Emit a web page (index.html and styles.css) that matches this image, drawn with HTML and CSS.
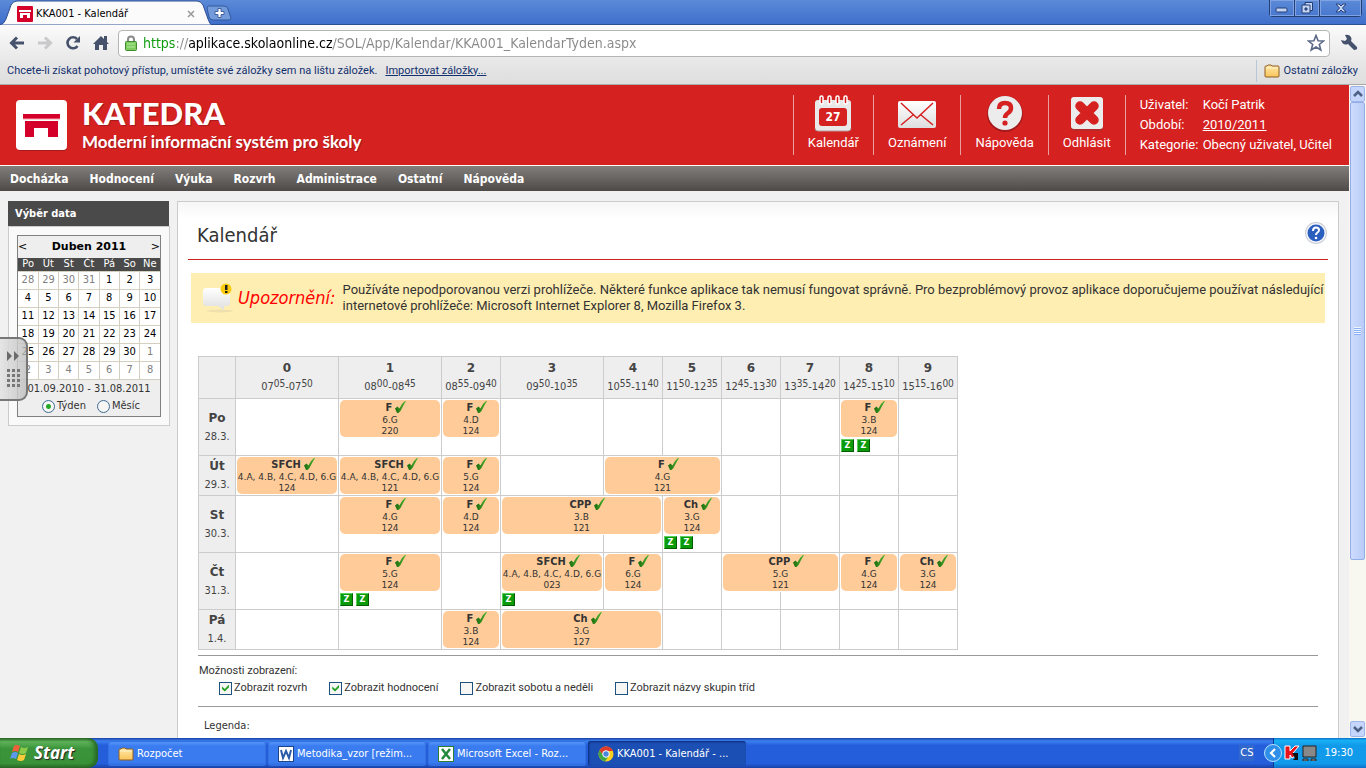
FILE: index.html
```html
<!DOCTYPE html>
<html lang="cs">
<head>
<meta charset="utf-8">
<title>KKA001 - Kalendář</title>
<link rel="stylesheet" href="styles.css">
</head>
<body>
<svg class="defs" aria-hidden="true">
  <defs>
    <linearGradient id="leaf" x1="0" x2="1"><stop offset="0" stop-color="#1c6a10"/><stop offset="1" stop-color="#4cb82c"/></linearGradient>
    <linearGradient id="silver" x1="0" y1="0" x2="0" y2="1"><stop offset="0" stop-color="#fff"/><stop offset="1" stop-color="#dedede"/></linearGradient>
    <linearGradient id="gold" x1="0" y1="0" x2="0" y2="1"><stop offset="0" stop-color="#ffe9a8"/><stop offset="1" stop-color="#fac45c"/></linearGradient>
    <symbol id="tick" viewBox="0 0 11 12"><path d="M0 7.500L2.500 5.500L4.500 7.500Q6.500 2.500 10 0H11Q8 5 5.500 10L3.500 12H2Z" fill="url(#leaf)"/></symbol>
    <symbol id="desk" viewBox="0 0 16 16"><rect width="16" height="16" rx="1" fill="#d4002a"/><path d="M2 4h12v2H2zM3 7h10v5h-3V9H6v3H3z" fill="#fff"/></symbol>
    <symbol id="folder" viewBox="0 0 16 14"><path d="M1 12V3q0-1 1-1h1l1-1h3l1 1h6q1 0 1 1v9q0 1-1 1H2q-1 0-1-1z" fill="url(#gold)" stroke="#8f5f20"/><path d="M2 4h12" stroke="#fff3c8"/></symbol>
  </defs>
</svg>

<header class="chrome">
  <div class="tabstrip">
    <div class="tab">
      <svg class="tab-shape" viewBox="0 0 212 25" preserveAspectRatio="none"><path d="M0 25Q4 24 6 19L11 5Q13 1 17 1H197Q201 1 203 5L208 19Q210 25 212 25Z" fill="#fbfbfb" stroke="#2c4f92"/></svg>
      <svg class="tab-icon"><use href="#desk"/></svg>
      <span class="tab-title">KKA001 - Kalendář</span>
      <button class="tab-close" aria-label="Zavřít kartu"><svg viewBox="0 0 8 8"><path d="M1 1l6 6M7 1L1 7" stroke="#999" stroke-width="1.500"/></svg></button>
    </div>
    <button class="new-tab" aria-label="Nová karta"><svg viewBox="0 0 26 16"><path d="M3 1H18Q21 1 22 4L25 13Q25 15 23 15H7Q4 15 3 12L1 3Q1 1 3 1Z" fill="#739ada" stroke="#33599e"/><path d="M9 6.500h3v-3h3v3h3v3h-3v3h-3v-3H9z" fill="#fff" stroke="#44639d"/></svg></button>
    <div class="window-buttons">
      <button aria-label="Minimalizovat"><svg viewBox="0 0 16 14"><rect x="2" y="7" width="11" height="4" rx="1" fill="#c3d4f3" stroke="#253f75"/></svg></button>
      <button aria-label="Obnovit"><svg viewBox="0 0 16 14"><path d="M6 1.500h7.500v8H11M6 1.500V4" fill="#c3d4f3" stroke="#253f75"/><path d="M3 4h8v8H3z" fill="#c3d4f3" stroke="#253f75"/><path d="M6 7h2v2H6z" fill="#4a72be" stroke="#253f75"/></svg></button>
      <button class="wide" aria-label="Zavřít"><svg viewBox="0 0 16 14"><path d="M3 3h3l2 2 2-2h3L9.500 7 13 11h-3L8 9l-2 2H3L6.500 7z" fill="#c3d4f3" stroke="#253f75"/></svg></button>
    </div>
  </div>
  <div class="toolbar">
    <button class="tool" aria-label="Zpět"><svg viewBox="0 0 18 18"><path d="M16 9H4M9 3.500L3.500 9L9 14.500" stroke="#46526b" stroke-width="3"/></svg></button>
    <button class="tool" aria-label="Vpřed"><svg viewBox="0 0 18 18"><path d="M2 9h12M9 3.500L14.500 9L9 14.500" stroke="#c9c9cc" stroke-width="3"/></svg></button>
    <button class="tool" aria-label="Obnovit stránku"><svg viewBox="0 0 18 18"><path d="M13.500 12A5.500 5.500 0 1 1 13 5" stroke="#46526b" stroke-width="2.600"/><path d="M16 2v6.500H9.500z" fill="#46526b"/></svg></button>
    <button class="tool" aria-label="Domů"><svg viewBox="0 0 18 18"><path d="M1 10L9 2l3 3V2h3v6l2 2h-2v6h-4v-5H7v5H3v-6z" fill="#46526b"/></svg></button>
    <div class="omnibox">
      <svg class="lock" viewBox="0 0 12 16"><path d="M3 7V4.500a3 3 0 0 1 6 0V7" stroke="#8a8a8a" stroke-width="2" fill="none"/><rect x=".5" y="6.500" width="11" height="9" rx="1" fill="#7ccb5c" stroke="#3f8c2c"/><path d="M2 9h8M2 12h8" stroke="#b5eaa0"/></svg>
      <input class="url" type="text" aria-label="Adresa" value="https://aplikace.skolaonline.cz/SOL/App/Kalendar/KKA001_KalendarTyden.aspx">
      <button class="star" aria-label="Přidat záložku"><svg viewBox="0 0 18 18"><path d="M9 1.500l2.100 5.200 5.400.3-4.200 3.500 1.500 5.500L9 13l-4.800 3 1.500-5.500L1.500 7l5.400-.3z" fill="#fff" stroke="#5a6984" stroke-width="1.600"/></svg></button>
    </div>
    <button class="tool wrench" aria-label="Nastavení"><svg viewBox="0 0 18 18"><path d="M1 6l4 1 2-2-2-4q4-1 6 2 1 2 0 4l6 6q1 3-3 3L8 10Q3 12 1 6z" fill="#46526b"/></svg></button>
  </div>
  <div class="bookmarks">
    <span>Chcete-li získat pohotový přístup, umístěte své záložky sem na lištu záložek.</span>
    <a href="#">Importovat záložky...</a>
    <button class="other"><svg><use href="#folder"/></svg>Ostatní záložky</button>
  </div>
</header>

<div class="viewport">
  <div class="page">
    <div class="banner">
      <svg class="logo" viewBox="0 0 52 52"><rect x="1" y="2" width="50" height="50" rx="4" fill="#a51a1c"/><rect x="0" y="1" width="51" height="50" rx="4" fill="#fff"/><path d="M7 15h37v5H7zM9 22h33v16H32V29H18v9H9z" fill="#d4002a"/><path d="M7 20h37" stroke="#f4a0a8"/></svg>
      <div class="brand"><div class="brand-name">KATEDRA</div><div class="brand-sub">Moderní informační systém pro školy</div></div>
      <nav class="actions">
        <a href="#"><svg viewBox="0 0 38 38"><rect x="1" y="5" width="36" height="31" rx="3" fill="#e9e9e9"/><path d="M1 33q0 3 3 3h30q3 0 3-3" stroke="#b59a9a" fill="none"/><rect x="5" y="13" width="28" height="18" rx="3" fill="#d52120"/><g fill="#d52120" stroke="#fff" stroke-width="1.500"><rect x="6" y="1" width="3" height="8" rx="1.500"/><rect x="14" y="1" width="3" height="8" rx="1.500"/><rect x="22" y="1" width="3" height="8" rx="1.500"/><rect x="30" y="1" width="3" height="8" rx="1.500"/></g><text x="19" y="26" text-anchor="middle" class="cal-num">27</text></svg>Kalendář</a>
        <a href="#"><svg viewBox="0 0 38 38"><rect x="0" y="6" width="38" height="27" rx="2" fill="url(#silver)"/><path d="M3 8l16 15L35 8M3 30l12-10M35 30L23 20" stroke="#d52120" fill="none" stroke-width="1.500"/></svg>Oznámení</a>
        <a href="#"><svg viewBox="0 0 38 38"><circle cx="19" cy="19" r="18" fill="#a51a1c"/><circle cx="19" cy="18" r="17" fill="#ececec"/><path d="M13 14q0-6 6-6t6 5q0 3-3 5-3 2-3 5" stroke="#d52120" stroke-width="4.500" fill="none"/><circle cx="19" cy="28" r="2.600" fill="#d52120"/></svg>Nápověda</a>
        <a href="#"><svg viewBox="0 0 38 38"><rect x="3" y="3" width="32" height="33" rx="3" fill="#b52a2a"/><rect x="3" y="2" width="32" height="32" rx="3" fill="#ececec"/><path d="M12 11l14 14M26 11L12 25" stroke="#d52120" stroke-width="9.500" stroke-linecap="round"/></svg>Odhlásit</a>
        <dl class="user">
          <dt>Uživatel:</dt><dd>Kočí Patrik</dd>
          <dt>Období:</dt><dd><a href="#">2010/2011</a></dd>
          <dt>Kategorie:</dt><dd>Obecný uživatel, Učitel</dd>
        </dl>
      </nav>
    </div>
    <nav class="menu">
      <a href="#">Docházka</a><a href="#">Hodnocení</a><a href="#">Výuka</a><a href="#">Rozvrh</a><a href="#">Administrace</a><a href="#">Ostatní</a><a href="#">Nápověda</a>
    </nav>
    <div class="columns">
      <aside class="side">
        <h2>Výběr data</h2>
        <div class="side-body">
          <div class="picker">
            <div class="month"><button aria-label="Předchozí měsíc">&lt;</button><b>Duben 2011</b><button aria-label="Další měsíc">&gt;</button></div>
            <table class="days">
              <thead><tr><th>Po</th><th>Út</th><th>St</th><th>Čt</th><th>Pá</th><th>So</th><th>Ne</th></tr></thead>
              <tbody>
                <tr><td class="off">28</td><td class="off">29</td><td class="off">30</td><td class="off">31</td><td>1</td><td>2</td><td>3</td></tr>
                <tr><td>4</td><td>5</td><td>6</td><td>7</td><td>8</td><td>9</td><td>10</td></tr>
                <tr><td>11</td><td>12</td><td>13</td><td>14</td><td>15</td><td>16</td><td>17</td></tr>
                <tr><td>18</td><td>19</td><td>20</td><td>21</td><td>22</td><td>23</td><td>24</td></tr>
                <tr><td>25</td><td>26</td><td>27</td><td>28</td><td>29</td><td>30</td><td class="off">1</td></tr>
                <tr><td class="off">2</td><td class="off">3</td><td class="off">4</td><td class="off">5</td><td class="off">6</td><td class="off">7</td><td class="off">8</td></tr>
              </tbody>
            </table>
            <div class="range">01.09.2010 - 31.08.2011</div>
            <div class="mode"><label><input type="radio" name="mode" checked>Týden</label><label><input type="radio" name="mode">Měsíc</label></div>
          </div>
        </div>
      </aside>
      <main class="panel">
        <div class="title"><h1>Kalendář</h1><button class="help" aria-label="Nápověda"><svg viewBox="0 0 24 24"><circle cx="12" cy="12" r="11" fill="#c9cdd6"/><circle cx="12" cy="12" r="10" fill="#f4f6fa"/><circle cx="12" cy="12" r="8.500" fill="#2a5fc0"/><path d="M9 10q0-3.500 3-3.500t3 2.500q0 1.500-1.500 2.500T12 14" stroke="#fff" stroke-width="2" fill="none"/><circle cx="12" cy="17" r="1.300" fill="#fff"/></svg></button></div>
        <div class="notice">
          <svg viewBox="0 0 30 30"><ellipse cx="17" cy="28" rx="13" ry="1.500" fill="#eee0ac"/><path d="M3 5h21q3 0 3 3v12q0 3-3 3h-3v4l-6-4H3q-3 0-3-3V8q0-3 3-3z" fill="url(#silver)"/><circle cx="23" cy="6" r="5.500" fill="#fdcb0e"/><path d="M22 2h2.500v5H22zM22 8h2.500v2H22z" fill="#222"/></svg>
          <em>Upozornění:</em>
          <p>Používáte nepodporovanou verzi prohlížeče. Některé funkce aplikace tak nemusí fungovat správně. Pro bezproblémový provoz aplikace doporučujeme používat následující internetové prohlížeče: Microsoft Internet Explorer 8, Mozilla Firefox 3.</p>
        </div>
        <table class="plan">
          <colgroup><col class="c-day"><col class="c-wide"><col class="c-wide"><col class="c-std"><col class="c-wide"><col class="c-std"><col class="c-std"><col class="c-std"><col class="c-std"><col class="c-std"><col class="c-std"></colgroup>
          <thead><tr><th></th>
            <th><b>0</b><span>07<sup>05</sup>-07<sup>50</sup></span></th>
            <th><b>1</b><span>08<sup>00</sup>-08<sup>45</sup></span></th>
            <th><b>2</b><span>08<sup>55</sup>-09<sup>40</sup></span></th>
            <th><b>3</b><span>09<sup>50</sup>-10<sup>35</sup></span></th>
            <th><b>4</b><span>10<sup>55</sup>-11<sup>40</sup></span></th>
            <th><b>5</b><span>11<sup>50</sup>-12<sup>35</sup></span></th>
            <th><b>6</b><span>12<sup>45</sup>-13<sup>30</sup></span></th>
            <th><b>7</b><span>13<sup>35</sup>-14<sup>20</sup></span></th>
            <th><b>8</b><span>14<sup>25</sup>-15<sup>10</sup></span></th>
            <th><b>9</b><span>15<sup>15</sup>-16<sup>00</sup></span></th>
          </tr></thead>
          <tbody>
            <tr class="tall"><th><b>Po</b><span>28.3.</span></th><td></td>
              <td><div class="lesson"><b>F <svg><use href="#tick"/></svg></b><span>6.G</span><span>220</span></div></td>
              <td><div class="lesson"><b>F <svg><use href="#tick"/></svg></b><span>4.D</span><span>124</span></div></td>
              <td></td><td></td><td></td><td></td><td></td>
              <td><div class="lesson"><b>F <svg><use href="#tick"/></svg></b><span>3.B</span><span>124</span></div><div class="marks"><i>Z</i><i>Z</i></div></td><td></td></tr>
            <tr><th><b>Út</b><span>29.3.</span></th>
              <td><div class="lesson"><b>SFCH <svg><use href="#tick"/></svg></b><span>4.A, 4.B, 4.C, 4.D, 6.G</span><span>124</span></div></td>
              <td><div class="lesson"><b>SFCH <svg><use href="#tick"/></svg></b><span>4.A, 4.B, 4.C, 4.D, 6.G</span><span>121</span></div></td>
              <td><div class="lesson"><b>F <svg><use href="#tick"/></svg></b><span>5.G</span><span>124</span></div></td>
              <td></td>
              <td><div class="lesson double"><b>F <svg><use href="#tick"/></svg></b><span>4.G</span><span>121</span></div></td>
              <td></td><td></td><td></td><td></td><td></td></tr>
            <tr class="tall"><th><b>St</b><span>30.3.</span></th><td></td>
              <td><div class="lesson"><b>F <svg><use href="#tick"/></svg></b><span>4.G</span><span>124</span></div></td>
              <td><div class="lesson"><b>F <svg><use href="#tick"/></svg></b><span>4.D</span><span>124</span></div></td>
              <td><div class="lesson double"><b>CPP <svg><use href="#tick"/></svg></b><span>3.B</span><span>121</span></div></td>
              <td></td>
              <td><div class="lesson"><b>Ch <svg><use href="#tick"/></svg></b><span>3.G</span><span>124</span></div><div class="marks"><i>Z</i><i>Z</i></div></td>
              <td></td><td></td><td></td><td></td></tr>
            <tr class="tall"><th><b>Čt</b><span>31.3.</span></th><td></td>
              <td><div class="lesson"><b>F <svg><use href="#tick"/></svg></b><span>5.G</span><span>124</span></div><div class="marks"><i>Z</i><i>Z</i></div></td>
              <td></td>
              <td><div class="lesson"><b>SFCH <svg><use href="#tick"/></svg></b><span>4.A, 4.B, 4.C, 4.D, 6.G</span><span>023</span></div><div class="marks"><i>Z</i></div></td>
              <td><div class="lesson"><b>F <svg><use href="#tick"/></svg></b><span>6.G</span><span>124</span></div></td>
              <td></td>
              <td><div class="lesson double"><b>CPP <svg><use href="#tick"/></svg></b><span>5.G</span><span>121</span></div></td>
              <td></td>
              <td><div class="lesson"><b>F <svg><use href="#tick"/></svg></b><span>4.G</span><span>124</span></div></td>
              <td><div class="lesson"><b>Ch <svg><use href="#tick"/></svg></b><span>3.G</span><span>124</span></div></td></tr>
            <tr><th><b>Pá</b><span>1.4.</span></th><td></td><td></td>
              <td><div class="lesson"><b>F <svg><use href="#tick"/></svg></b><span>3.B</span><span>124</span></div></td>
              <td><div class="lesson double"><b>Ch <svg><use href="#tick"/></svg></b><span>3.G</span><span>127</span></div></td>
              <td></td><td></td><td></td><td></td><td></td><td></td></tr>
          </tbody>
        </table>
        <fieldset class="options">
          <legend>Možnosti zobrazení:</legend>
          <div class="checks">
            <label><input type="checkbox" checked>Zobrazit rozvrh</label>
            <label><input type="checkbox" checked>Zobrazit hodnocení</label>
            <label><input type="checkbox">Zobrazit sobotu a neděli</label>
            <label><input type="checkbox">Zobrazit názvy skupin tříd</label>
          </div>
        </fieldset>
        <div class="legend">Legenda:</div>
      </main>
    </div>
  </div>
  <div class="scrollbar">
    <button aria-label="Nahoru"><svg viewBox="0 0 10 8"><path d="M1 6l4-4 4 4" stroke="#4d6185" stroke-width="2.500"/></svg></button>
    <div class="track"><div class="thumb"><span></span></div></div>
    <button aria-label="Dolů"><svg viewBox="0 0 10 8"><path d="M1 2l4 4 4-4" stroke="#4d6185" stroke-width="2.500"/></svg></button>
  </div>
  <button class="drawer" aria-label="Vysunout panel"><svg viewBox="0 0 28 64"><path d="M7 14l5 5-5 5zM14 14l5 5-5 5z" fill="#6a6a6a"/><g fill="#777"><path d="M7 32h3v3H7zM12 32h3v3h-3zM17 32h3v3h-3zM7 37h3v3H7zM12 37h3v3h-3zM17 37h3v3h-3zM7 42h3v3H7zM12 42h3v3h-3zM17 42h3v3h-3zM7 47h3v3H7zM12 47h3v3h-3zM17 47h3v3h-3z"/></g></svg></button>
</div>

<footer class="taskbar">
  <button class="start"><svg viewBox="0 0 20 20"><path d="M4 3q3-2 6 0L8 9Q5 7 2 9z" fill="#f0603a"/><path d="M11 4q3 2 7 0l-2 6q-3 2-7 0z" fill="#8ccc4a"/><path d="M2 10q3-2 6 0l-2 6q-3-2-6 0z" fill="#5c9af0"/><path d="M9 11q3 2 7 0l-2 6q-3 2-7 0z" fill="#fbcb3a"/></svg>Start</button>
  <div class="tasks">
    <button><svg><use href="#folder"/></svg><span>Rozpočet</span></button>
    <button><svg viewBox="0 0 16 16"><rect x=".5" y=".5" width="15" height="15" fill="#fff" stroke="#1d4488"/><path d="M3 4l2 8 3-7 3 7 2-8" stroke="#2a5ca8" stroke-width="2" fill="none"/></svg><span>Metodika_vzor [režim...</span></button>
    <button><svg viewBox="0 0 16 16"><rect x=".5" y=".5" width="15" height="15" fill="#fff" stroke="#2b7f36"/><path d="M4 3l8 10M12 3L4 13" stroke="#23893a" stroke-width="2.500"/></svg><span>Microsoft Excel - Roz...</span></button>
    <button class="active"><svg viewBox="0 0 16 16"><circle cx="8" cy="8" r="7.500" fill="#fbd01e"/><path d="M1.500 4.500A7.500 7.500 0 0 1 15 5H8L5 9z" fill="#e03a2c"/><path d="M1.500 4.500A7.500 7.500 0 0 0 7 15.400L10 11 5 9z" fill="#3fa648"/><circle cx="8" cy="8" r="3.300" fill="#4a86dc" stroke="#fff"/></svg><span>KKA001 - Kalendář - ...</span></button>
  </div>
  <span class="lang">CS</span>
  <div class="tray">
    <button class="expand" aria-label="Zobrazit skryté ikony"><svg viewBox="0 0 18 18"><circle cx="9" cy="9" r="8.500" fill="#2f8fe8" stroke="#b8e0ff"/><path d="M11 5L7 9l4 4" stroke="#fff" stroke-width="2.200" fill="none"/></svg></button>
    <svg class="tray-icon" viewBox="0 0 16 16"><path d="M1 1h5v5l5-5h4L9 8l2 3-3 2-2-3v4H1z" fill="#e8131b" stroke="#fff"/><path d="M8 8h6v7H9l2-2z" fill="#111"/></svg>
    <svg class="tray-icon" viewBox="0 0 16 16"><path d="M1 1h13v11H1z" fill="#888" stroke="#222"/><path d="M1 14h5v2H1zM9 14h5v2H9z" fill="#999" stroke="#222"/></svg>
    <time>19:30</time>
  </div>
</footer>
</body>
</html>
```

FILE: styles.css
```css
* { box-sizing: border-box; }
body {
  margin: 0; height: 100vh; display: flex; flex-direction: column; overflow: hidden;
  font: 11px/14px "DejaVu Sans Condensed", "DejaVu Sans", sans-serif; color: #333;
}
button { font: inherit; color: inherit; border: 0; background: none; padding: 0; margin: 0; }
svg { display: block; fill: none; flex: none; }
.defs { position: absolute; width: 0; height: 0; }

/* browser frame */
.tabstrip { height: 25px; display: flex; align-items: flex-end; background: linear-gradient(#5b8ad8, #3f6fcb); border-bottom: 1px solid #2c4f92; }
.tab { position: relative; width: 212px; height: 25px; margin-bottom: -1px; display: flex; align-items: center; padding: 2px 17px 0; color: #000; }
.tab-shape { position: absolute; left: 0; top: 0; width: 100%; height: 100%; }
.tab-icon { position: relative; width: 16px; height: 16px; }
.tab-title { position: relative; margin-left: 3px; flex: 1; white-space: nowrap; }
.tab-close { position: relative; }
.tab-close svg { width: 8px; height: 8px; }
.new-tab { align-self: center; margin-left: -6px; padding-top: 1px; }
.new-tab svg { width: 26px; height: 16px; }
.window-buttons { margin-left: auto; margin-right: 4px; align-self: flex-start; display: flex; border: 1px solid #253f75; border-top: 0; border-radius: 0 0 4px 4px; }
.window-buttons button { width: 25px; height: 16px; display: grid; place-items: center; border-right: 1px solid #253f75; box-shadow: inset 0 0 0 1px #7fa3e2; }
.window-buttons .wide { width: 41px; border-right: 0; }
.window-buttons svg { width: 16px; height: 14px; }
.toolbar { height: 34px; display: flex; align-items: center; gap: 10px; padding: 2px 8px 0; background: linear-gradient(#fbfbfb, #e9e9e9); }
.tool svg { width: 18px; height: 18px; }
.omnibox { flex: 1; height: 27px; display: flex; align-items: center; margin-left: -2px; padding: 0 4px 0 6px; background: #fff; border: 1px solid #b4b4b4; border-radius: 4px; }
.lock { width: 12px; height: 16px; }
.url {
  flex: 1; min-width: 0; border: 0; padding: 0 0 0 6px; font: 14px/20px "DejaVu Sans Condensed", sans-serif; color: transparent;
  background: linear-gradient(90deg, #0a9a0a 39px, #888 39px 51px, #000 51px 196px, #888 196px) text;
}
.star svg { width: 18px; height: 18px; }
.bookmarks { height: 26px; display: flex; align-items: center; gap: 8px; padding: 0 8px 2px 7px; background: linear-gradient(#e8e8e8, #dedede); border-bottom: 1px solid #aaa; color: #12306e; white-space: nowrap; font-family: Roboto, sans-serif; }
.bookmarks a { color: inherit; }
.other { margin-left: auto; display: flex; align-items: center; gap: 4px; border-left: 1px solid #b8c6d8; padding-left: 7px; height: 22px; }
.other svg { width: 16px; height: 14px; }

/* page */
.viewport { position: relative; flex: 1; min-height: 0; display: flex; }
.page { flex: 1; min-width: 0; display: flex; flex-direction: column; overflow: hidden; background: #f1f1f1; }
.banner { height: 80px; flex: none; display: flex; align-items: center; padding-left: 16px; background: #d52120; color: #fff; }
.logo { width: 52px; height: 52px; }
.brand { margin-left: 14px; font-family: Lato, sans-serif; font-weight: 700; text-shadow: 1px 1px 0 #a51a1c; white-space: nowrap; }
.brand-name { font-size: 31px; line-height: 34px; font-weight: 900; }
.brand-sub { font-size: 17px; line-height: 24px; }
.actions { margin-left: auto; display: flex; font: 13px/20px Roboto, sans-serif; }
.actions > a { display: flex; flex-direction: column; align-items: center; padding: 0 14px; height: 60px; border-left: 1px solid #e9a09f; color: #fff; text-decoration: none; }
.actions > a svg { width: 38px; height: 38px; }
.cal-num { font: 700 12px "DejaVu Sans Condensed", sans-serif; fill: #fff; }
.user { margin: 0; padding: 0 17px 0 14px; border-left: 1px solid #e9a09f; display: grid; grid-template-columns: 63px auto; line-height: 20px; white-space: nowrap; }
.user dd { margin: 0; }
.user a { color: #fff; }
.menu { height: 26px; flex: none; display: flex; align-items: center; gap: 21px; padding-left: 10px; border-top: 1px solid #fff; background: linear-gradient(#827e7c, #4d4a48); font-size: 12px; font-weight: 700; }
.menu a { color: #fff; text-decoration: none; }
.columns { flex: 1; display: flex; gap: 7px; padding: 10px 10px 0 8px; align-items: stretch; }
.side { width: 162px; flex: none; }
.side h2 { margin: 0 1px 0 0; height: 25px; padding-left: 7px; font-size: 11px; line-height: 25px; color: #fff; background: #4a4a4a; }
.side-body { padding: 8px; background: #f9f9f9; border: 1px solid #ccc; }
.picker { border: 1px solid #808080; background: #eee; color: #000; }
.month { height: 22px; display: flex; justify-content: space-between; align-items: center; font-family: "DejaVu Sans", sans-serif; }
.days { width: 100%; border-collapse: collapse; table-layout: fixed; text-align: center; background: #fff; }
.days th { height: 13px; line-height: 12px; padding: 0; background: #4a4a4a; color: #fff; font-weight: 400; }
.days td { height: 18px; padding: 0; border: 1px solid #d4d0c0; }
.days td:first-child { border-left: 0; }
.days td:last-child { border-right: 0; }
.days .off { color: #808080; }
.range { height: 17px; line-height: 17px; text-align: center; color: #333; white-space: nowrap; }
.mode { height: 19px; display: flex; justify-content: center; gap: 11px; padding-left: 4px; color: #333; }
.mode label { display: flex; align-items: center; gap: 2px; }
input[type=radio] { appearance: none; width: 13px; height: 13px; margin: 0; border: 1px solid #3c6a94; border-radius: 50%; background: #f6f6f4; }
input[type=radio]:checked { background: radial-gradient(circle, #28a828 2px, #f6f6f4 3px); }
.panel { flex: 1; min-width: 0; padding: 0 10px; border: 1px solid #ccc; background: linear-gradient(#f6f6f6, #fff 18px); }
.title { height: 58px; display: flex; align-items: center; justify-content: space-between; padding: 8px 0 0 9px; border-bottom: 1px solid #c22; }
.title h1 { margin: 0; font-size: 20px; line-height: 26px; font-weight: 400; }
.help { padding-bottom: 4px; }
.help svg { width: 24px; height: 24px; }
.notice { margin: 13px 3px 33px; min-height: 50px; display: flex; align-items: center; padding: 0 0 0 12px; background: #ffeeb2; }
.notice svg { width: 30px; height: 30px; }
.notice em { margin: 0 7px 0 5px; font-size: 18px; line-height: 20px; color: #f00; white-space: nowrap; }
.notice p { margin: 0; font: 13px/16px Roboto, sans-serif; }

/* timetable */
.plan { border-collapse: collapse; table-layout: fixed; width: 760px; margin-left: 10px; background: #fff; }
.c-day { width: 37px; }
.c-wide { width: 103px; }
.c-std { width: 59px; }
.plan th, .plan td { border: 1px solid #ccc; padding: 1px; }
.plan td { vertical-align: top; }
.plan th { background: #eee; font-weight: 400; white-space: nowrap; color: #444; }
.plan th b, .plan th span { display: block; line-height: 18px; }
.plan th b { font-family: "DejaVu Sans", sans-serif; font-size: 12px; }
.plan thead th { height: 42px; padding: 2px 0; }
.plan thead span, .plan tbody th span { padding-top: 1px; }
.plan sup { font-size: 10px; line-height: 0; vertical-align: 3px; }
.plan tbody tr { height: 40px; }
.plan tbody .tall { height: 57px; }
.plan .lesson { position: relative; height: 37px; border-radius: 5px; background: #fc9; box-shadow: 0 0 0 1px #fff; text-align: center; color: #333; white-space: nowrap; }
.plan .double { width: calc(100% + 59px); }
.lesson b { display: flex; justify-content: center; gap: 3px; height: 15px; line-height: 16px; padding-left: 12px; }
.lesson b svg { width: 11px; height: 12px; margin-top: 1px; }
.lesson span { display: block; font: 9px/11px "DejaVu Sans", sans-serif; }
.marks { display: flex; gap: 3px; padding-top: 2px; }
.marks i { width: 13px; height: 13px; border: 1px solid; border-color: #5ad05a #065a06 #065a06 #5ad05a; background: #0a9a0a; color: #fff; font: 700 9px/11px "DejaVu Sans Condensed", sans-serif; text-align: center; }

.options { margin: 5px 10px 0; padding: 7px 1px 11px; border: 0; border-top: 1px solid #999; border-bottom: 1px solid #999; font-family: Roboto, sans-serif; }
.options legend { float: left; width: 100%; padding: 0; line-height: 15px; }
.checks { clear: both; display: flex; gap: 22px; padding: 3px 0 0 20px; }
.checks label { display: flex; align-items: center; gap: 2px; }
input[type=checkbox] { appearance: none; width: 13px; height: 13px; margin: 0; border: 1px solid #1c5180; background: #f6f6f4; display: grid; place-items: center; }
input[type=checkbox]:checked::before { content: ""; width: 7px; height: 7px; background: #21a121; clip-path: polygon(0 30%, 40% 65%, 100% 0, 100% 40%, 40% 100%, 0 65%); }
.legend { padding: 12px 16px; }

.scrollbar { width: 17px; flex: none; display: flex; flex-direction: column; background: #f8f7f0; padding: 1px; }
.scrollbar button { height: 16px; display: grid; place-items: center; background: #c6d5fb; border: 1px solid #9db6ea; border-radius: 2px; }
.scrollbar button svg { width: 10px; height: 8px; }
.track { flex: 1; }
.thumb { height: 74%; border: 1px solid #93aee6; border-radius: 2px; background: linear-gradient(90deg, #cddcfd, #b9cbf8); display: grid; place-items: center; }
.thumb span { width: 7px; height: 8px; background: repeating-linear-gradient(#eef4fe 0 1px, #8cb0f8 1px 2px); }
.drawer { position: absolute; left: 0; top: 252px; border: 2px solid #777; border-left: 0; border-radius: 0 9px 9px 0; background: linear-gradient(90deg, #e4e4e4ee, #bdbdbdcc); width: 28px; height: 64px; overflow: hidden; }
.drawer svg { width: 28px; height: 64px; margin-top: -2px; }

/* taskbar */
.taskbar { height: 30px; flex: none; display: flex; background: linear-gradient(#1941a5, #3a80f0 10%, #245edb 25%, #245edb 85%, #1941a5); color: #fff; }
.start { width: 98px; display: flex; align-items: center; gap: 4px; padding-left: 10px; border-radius: 0 10px 10px 0; background: linear-gradient(#2f6b2c, #5fb45a 12%, #3c943a 35%, #3a9238 85%, #2a6b28); box-shadow: inset -3px 0 4px #246322; font: italic 700 17px/26px "Open Sans", sans-serif; text-shadow: 1px 1px 1px #222; }
.start svg { width: 20px; height: 20px; }
.tasks { flex: 1; display: flex; gap: 2px; padding: 3px 0 2px 10px; }
.tasks button { width: 158px; display: flex; align-items: center; gap: 3px; padding-left: 10px; border-radius: 3px; background: linear-gradient(#5c9bfa, #3a7cf0 20%, #3a7cf0 85%, #2c66d8); box-shadow: inset 0 0 0 1px #3370e0; text-align: left; white-space: nowrap; }
.tasks .active { background: #1c4fb4; box-shadow: inset 1px 1px 2px #0c2c78; }
.tasks svg { width: 16px; height: 16px; }
.lang { align-self: center; margin-right: 19px; padding: 1px; background: #3267cc; }
.tray { display: flex; align-items: center; gap: 2px; padding-right: 13px; background: linear-gradient(#0e70c8, #18b0f4 8%, #129aea 25%, #129aea 85%, #0e70c8); border-left: 1px solid #0d3a8c; }
.expand { margin-left: -10px; }
.expand svg { width: 18px; height: 18px; }
.tray-icon { width: 16px; height: 16px; }
.tray time { margin-left: 4px; }
```
